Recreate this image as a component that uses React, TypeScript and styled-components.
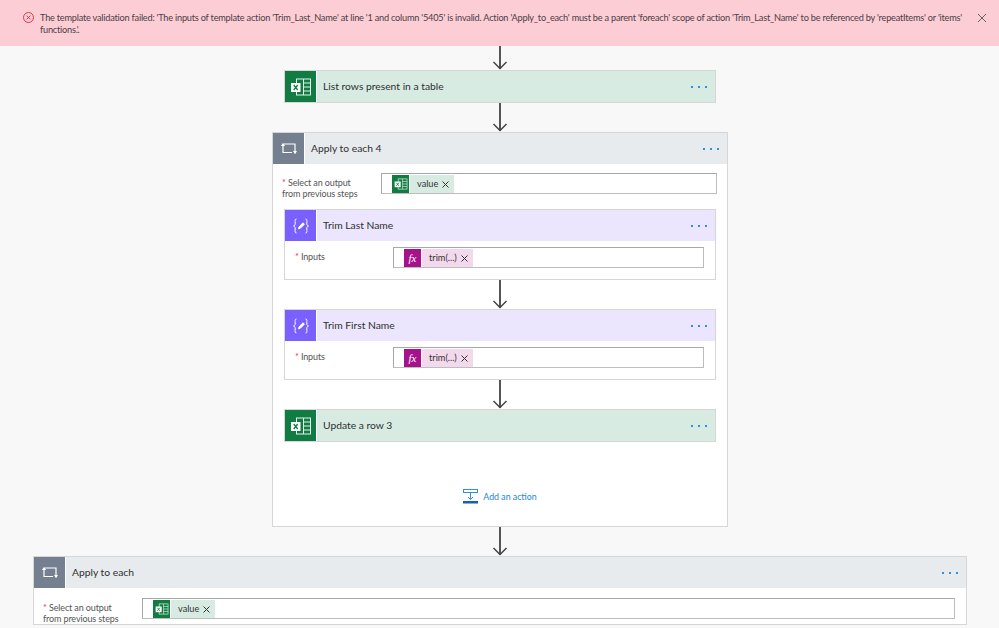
import type { ReactNode } from "react";
import styled, { createGlobalStyle } from "styled-components";

const GlobalStyle = createGlobalStyle`
  html, body {
    margin: 0;
    padding: 0;
    background: #f8f8f8;
  }
  body {
    width: 999px;
    height: 628px;
    overflow: hidden;
    font-family: Lato, "Open Sans", "Liberation Sans", sans-serif;
    color: #333;
  }
`;

const Banner = styled.div`
  height: 46px;
  box-sizing: border-box;
  background: #fccdd5;
  display: flex;
  align-items: flex-start;
  padding: 12px 12px 0 23px;
  gap: 6px;
`;

const BannerText = styled.div`
  flex: 1;
  font-size: 9.2px;
  letter-spacing: -0.22px;
  line-height: 12px;
  color: #4a4045;
`;

const BannerClose = styled.svg`
  width: 10px;
  height: 10px;
  margin-top: 1px;
  flex: none;
`;

const Canvas = styled.div`
  width: 1000px;
  display: flex;
  flex-direction: column;
  align-items: center;
`;

const ConnectorWrap = styled.div<{ $h: number }>`
  height: ${({ $h }) => $h}px;
  width: 20px;
  flex: none;
`;

const ActionCard = styled.div<{ $width: number }>`
  width: ${({ $width }) => $width}px;
  box-sizing: border-box;
  flex: none;
  border: 1px solid #d6d6d6;
  background: #fff;
`;

const Header = styled.div<{ $bg: string }>`
  height: 31px;
  display: flex;
  align-items: center;
  background: ${({ $bg }) => $bg};
`;

const Tile = styled.div<{ $bg: string }>`
  width: 31px;
  height: 31px;
  flex: none;
  display: flex;
  align-items: center;
  justify-content: center;
  background: ${({ $bg }) => $bg};
  border-right: 1px solid #fff;
`;

const Title = styled.div`
  flex: 1;
  margin-left: 6px;
  padding-bottom: 1px;
  font-size: 10.3px;
  color: #2f2f2f;
`;

const Dots = styled.div`
  display: flex;
  gap: 5px;
  margin-right: 8px;
  span {
    width: 2px;
    height: 2px;
    background: #2f8fe0;
  }
`;

const ScopeBody = styled.div`
  height: 362px;
  display: flex;
  flex-direction: column;
  align-items: center;
`;

const FieldRow = styled.div<{ $left: number; $right: number; $top: number; $bottom?: number }>`
  display: flex;
  align-self: stretch;
  padding: ${({ $top }) => $top}px ${({ $right }) => $right}px ${({ $bottom }) => $bottom ?? 0}px
    ${({ $left }) => $left}px;
`;

const FieldLabel = styled.div<{ $width: number }>`
  width: ${({ $width }) => $width}px;
  flex: none;
  font-size: 9px;
  letter-spacing: -0.12px;
  line-height: 11px;
  color: #555;
  padding-top: 4px;
  em {
    color: #e5304a;
    font-style: normal;
  }
`;

const FieldBox = styled.div`
  flex: 1;
  height: 21px;
  box-sizing: border-box;
  display: flex;
  align-items: center;
  padding-left: 10px;
  background: #fff;
  border: 1px solid #bdbdbd;
  border-top-color: #a8a8a8;
  border-left-color: #a8a8a8;
`;

const Token = styled.div<{ $bg: string }>`
  height: 18px;
  display: flex;
  align-items: center;
  background: ${({ $bg }) => $bg};
  font-size: 9.2px;
  color: #333;
`;

const TokenIcon = styled.div<{ $bg: string }>`
  width: 17px;
  height: 18px;
  display: flex;
  align-items: center;
  justify-content: center;
  background: ${({ $bg }) => $bg};
  border-right: 1px solid #fff;
  color: #fff;
  font-family: "Liberation Serif", serif;
  font-style: italic;
  font-size: 11px;
  margin-right: 7px;
`;

const TokenClose = styled.svg`
  width: 7px;
  height: 7px;
  margin: 2px 5px 0 4px;
`;

const NestedBody = styled.div`
  height: 38px;
`;

const AddAction = styled.div`
  margin-top: 47px;
  display: flex;
  align-items: center;
  gap: 4px;
  font-size: 8.8px;
  color: #1b86e0;
`;

const Arrow = ({ h }: { h: number }) => (
  <ConnectorWrap $h={h}>
    <svg width="20" height={h}>
      <path d={`M10 0V${h - 1}`} stroke="#555" strokeWidth="2" fill="none" />
      <path d={`M3.500 ${h - 8}L10 ${h - 1.500}L16.500 ${h - 8}`} stroke="#444" strokeWidth="1.500" fill="none" />
    </svg>
  </ConnectorWrap>
);

const ExcelGlyph = ({ size = 22 }: { size?: number }) => (
  <svg width={size} height={size} viewBox="0 0 22 22" fill="none">
    <rect x="6.500" y="3" width="14" height="16" stroke="#fff" strokeWidth="0.9" />
    <path d="M13.500 3V19M13.500 7H20.500M13.500 11H20.500M13.500 15H20.500" stroke="#fff" strokeWidth="0.9" />
    <rect x="1" y="7" width="9.500" height="9" fill="#fff" />
    <path d="M3.700 9L7.700 14M7.700 9L3.700 14" stroke="#107c41" strokeWidth="1.300" />
  </svg>
);

const LoopGlyph = () => (
  <svg width="18" height="15" viewBox="0 0 18 15" fill="none">
    <path d="M4 3H15V10M3 4V11.500H12" stroke="#fff" strokeWidth="1.200" />
    <path d="M1 5L3 1.800L5 5ZM13 10L15 13.200L17 10Z" fill="#fff" />
  </svg>
);

const VariableGlyph = () => (
  <svg width="18" height="16" viewBox="0 0 18 16" fill="none" stroke="#fff" strokeWidth="1">
    <path d="M4.500 1C2.500 1 3.200 3 3.200 5S3 7.500 1.500 8C3 8.500 3.200 9 3.200 11S2.500 15 4.500 15" />
    <path d="M13.500 1C15.500 1 14.800 3 14.800 5S15 7.500 16.500 8C15 8.500 14.800 9 14.800 11S15.500 15 13.500 15" />
    <path d="M6.500 10.800L7 9L11 4.800L12.400 6.200L8.300 10.300Z" fill="#fff" />
  </svg>
);

const Close = () => (
  <TokenClose viewBox="0 0 7 7">
    <path d="M0.500 0.500L6.500 6.500M6.500 0.500L0.500 6.500" stroke="#333" strokeWidth="1" />
  </TokenClose>
);

const CardHeader = ({ title, tile, bg, icon }: { title: string; tile: string; bg: string; icon: ReactNode }) => (
  <Header $bg={bg}>
    <Tile $bg={tile}>{icon}</Tile>
    <Title>{title}</Title>
    <Dots>
      <span />
      <span />
      <span />
    </Dots>
  </Header>
);

const VariableCard = ({ title }: { title: string }) => (
  <ActionCard $width={432}>
    <CardHeader title={title} tile="#7a60ff" bg="#ebe6fd" icon={<VariableGlyph />} />
    <NestedBody>
      <FieldRow $left={10} $right={11} $top={6}>
        <FieldLabel $width={98}>
          <em>* </em>Inputs
        </FieldLabel>
        <FieldBox>
          <Token $bg="#f3d9ec">
            <TokenIcon $bg="#a6128a">fx</TokenIcon>
            trim(...)
            <Close />
          </Token>
        </FieldBox>
      </FieldRow>
    </NestedBody>
  </ActionCard>
);

const ExcelCard = ({ title }: { title: string }) => (
  <ActionCard $width={432}>
    <CardHeader title={title} tile="#107c41" bg="#d8ebe3" icon={<ExcelGlyph />} />
  </ActionCard>
);

const SelectField = ({ right, top, bottom }: { right: number; top: number; bottom: number }) => (
  <FieldRow $left={9} $right={right} $top={top} $bottom={bottom}>
    <FieldLabel $width={99}>
      <em>* </em>Select an output
      <br />
      from previous steps
    </FieldLabel>
    <FieldBox>
      <Token $bg="#d8ebe3">
        <TokenIcon $bg="#107c41">
          <ExcelGlyph size={14} />
        </TokenIcon>
        value
        <Close />
      </Token>
    </FieldBox>
  </FieldRow>
);

const App = () => (
  <>
    <GlobalStyle />
    <Banner>
      <svg width="11" height="11" viewBox="0 0 11 11" fill="none" stroke="#d8283c" strokeWidth="0.9">
        <circle cx="5.500" cy="5.500" r="5" />
        <path d="M3.700 3.700L7.300 7.300M7.300 3.700L3.700 7.300" />
      </svg>
      <BannerText>
        The template validation failed: 'The inputs of template action 'Trim_Last_Name' at line '1 and column '5405' is
        invalid. Action 'Apply_to_each' must be a parent 'foreach' scope of action 'Trim_Last_Name' to be referenced by
        'repeatItems' or 'items' functions.'.
      </BannerText>
      <BannerClose viewBox="0 0 10 10">
        <path d="M1 1L9 9M9 1L1 9" stroke="#555" strokeWidth="0.9" />
      </BannerClose>
    </Banner>
    <Canvas>
      <Arrow h={24} />
      <ExcelCard title="List rows present in a table" />
      <Arrow h={29} />
      <ActionCard $width={456}>
        <CardHeader title="Apply to each 4" tile="#74808f" bg="#e8ebee" icon={<LoopGlyph />} />
        <ScopeBody>
          <SelectField right={10} top={9} bottom={10} />
          <VariableCard title="Trim Last Name" />
          <Arrow h={29} />
          <VariableCard title="Trim First Name" />
          <Arrow h={29} />
          <ExcelCard title="Update a row 3" />
          <AddAction>
            <svg width="16" height="15" viewBox="0 0 16 15" fill="none" stroke="#2f8fe0" strokeWidth="1">
              <rect x="0.500" y="0.500" width="14" height="3" />
              <path d="M7.500 4V10M5 8L7.500 10.500L10 8" />
              <rect x="0" y="12" width="15" height="2.500" fill="#0f62b8" stroke="none" />
            </svg>
            Add an action
          </AddAction>
        </ScopeBody>
      </ActionCard>
      <Arrow h={29} />
      <ActionCard $width={934}>
        <CardHeader title="Apply to each" tile="#74808f" bg="#e8ebee" icon={<LoopGlyph />} />
        <SelectField right={11} top={10} bottom={0} />
      </ActionCard>
    </Canvas>
  </>
);

export default App;
